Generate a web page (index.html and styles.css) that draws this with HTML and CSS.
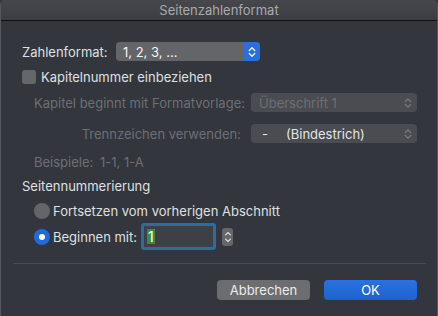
FILE: index.html
```html
<!DOCTYPE html>
<html lang="de">
<head>
<meta charset="utf-8">
<title>Seitenzahlenformat</title>
<link rel="stylesheet" href="styles.css">
</head>
<body>
<div class="window">
  <div class="titlebar">Seitenzahlenformat</div>
  <div class="content">
    <div class="row r1">
      <span class="label fmt">Zahlenformat:</span>
      <div class="popup main">
        <span class="ptext">1, 2, 3, ...</span>
        <span class="pstep blue">
          <svg width="8" height="12" viewBox="0 0 8 12"><path d="M1.2 4.6 L4 1.8 L6.8 4.6 M1.2 7.4 L4 10.2 L6.8 7.4" fill="none" stroke="#fff" stroke-width="1.3" stroke-linecap="round" stroke-linejoin="round"/></svg>
        </span>
      </div>
    </div>
    <div class="row r2">
      <span class="checkbox"></span>
      <span class="label">Kapitelnummer einbeziehen</span>
    </div>
    <div class="row r3">
      <span class="label col dis">Kapitel beginnt mit Formatvorlage:</span>
      <div class="popup wide">
        <span class="ptext dis">Überschrift 1</span>
        <span class="chev">
          <svg width="8" height="12" viewBox="0 0 8 12"><path d="M1.2 4.6 L4 1.8 L6.8 4.6 M1.2 7.4 L4 10.2 L6.8 7.4" fill="none" stroke="#7b7d82" stroke-width="1.2" stroke-linecap="round" stroke-linejoin="round"/></svg>
        </span>
      </div>
    </div>
    <div class="row r4">
      <span class="label col dis">Trennzeichen verwenden:</span>
      <div class="popup wide">
        <span class="ptext light"><span class="dash">-</span>(Bindestrich)</span>
        <span class="chev">
          <svg width="8" height="12" viewBox="0 0 8 12"><path d="M1.2 4.6 L4 1.8 L6.8 4.6 M1.2 7.4 L4 10.2 L6.8 7.4" fill="none" stroke="#7b7d82" stroke-width="1.2" stroke-linecap="round" stroke-linejoin="round"/></svg>
        </span>
      </div>
    </div>
    <div class="row r5">
      <span class="label dis ex">Beispiele:</span>
      <span class="label dis">1-1, 1-A</span>
    </div>
    <div class="row r6">
      <span class="label">Seitennummerierung</span>
    </div>
    <div class="row r7">
      <span class="radio"></span>
      <span class="label">Fortsetzen vom vorherigen Abschnitt</span>
    </div>
    <div class="row r8">
      <span class="radio on"></span>
      <span class="label begin">Beginnen mit:</span>
      <div class="field"><span class="sel">1</span></div>
      <span class="stepper">
        <svg width="8" height="14" viewBox="0 0 8 14"><path d="M1.5 5 L4 2.5 L6.5 5 M1.5 9 L4 11.5 L6.5 9" fill="none" stroke="#d8d9db" stroke-width="1.1" stroke-linecap="round" stroke-linejoin="round"/></svg>
      </span>
    </div>
    <div class="separator"></div>
    <div class="buttons">
      <button class="btn cancel">Abbrechen</button>
      <button class="btn ok">OK</button>
    </div>
  </div>
</div>
</body>
</html>
```
FILE: styles.css
```css
* { box-sizing: border-box; }
html, body { margin: 0; padding: 0; background: #33363d; }
body {
  font-family: Inter, "Liberation Sans", Arial, sans-serif;
  font-size: 13px;
  color: #dfe0e2;
}
.window {
  width: 438px;
  height: 316px;
  background: #33363d;
  border-left: 1px solid #55575c;
  border-right: 1px solid #55575c;
  border-radius: 5px 5px 0 0;
  overflow: hidden;
}
.titlebar {
  height: 21px;
  background: linear-gradient(#46484d, #3b3d42);
  border-bottom: 1px solid #101012;
  color: #a9aaad;
  text-align: center;
  line-height: 20px;
  font-size: 13px;
}
.content { padding-left: 21px; }
.row { display: flex; align-items: center; }
.label { white-space: nowrap; }
.dis { color: #6d6f74; }
.r1 { height: 19px; margin-top: 21px; }
.fmt { width: 94px; }
.popup {
  display: flex;
  align-items: center;
  height: 19px;
  border-radius: 4px;
  background: #4a4c52;
}
.popup.main {
  width: 144px;
  background: #646569;
  overflow: hidden;
}
.ptext { flex: 1; padding-left: 8px; white-space: nowrap; }
.main .ptext { color: #f4f4f5; padding-left: 7px; }
.pstep {
  width: 16px;
  height: 19px;
  display: flex;
  align-items: center;
  justify-content: center;
}
.pstep.blue { background: #2a6fdc; }
.chev { width: 16px; display: flex; justify-content: center; margin-right: 1px; }
.r2 { height: 20px; margin-top: 6px; }
.checkbox {
  width: 14px;
  height: 14px;
  border-radius: 3px;
  background: #65676b;
  margin-right: 5px;
}
.r3 { height: 19px; margin-top: 6px; padding-left: 12px; }
.col { width: 217px; text-align: right; padding-right: 10px; }
.popup.wide { width: 166px; }
.ptext.light { color: #e4e5e6; }
.dash { display: inline-block; width: 27px; padding-left: 3px; }
.r4 { height: 19px; margin-top: 12px; padding-left: 12px; }
.r5 { height: 20px; margin-top: 9px; padding-left: 12px; }
.ex { width: 66px; }
.r6 { height: 20px; margin-top: 4px; }
.r7 { height: 20px; margin-top: 5px; padding-left: 12px; }
.radio {
  width: 16px;
  height: 16px;
  border-radius: 50%;
  background: #636569;
  margin-right: 3px;
  display: flex;
  align-items: center;
  justify-content: center;
}
.radio.on { background: #1f6bdb; }
.radio.on::after {
  content: "";
  width: 6px;
  height: 6px;
  border-radius: 50%;
  background: #fff;
}
.r8 { height: 27px; margin-top: 2px; padding-left: 12px; }
.begin { width: 88px; }
.field {
  width: 75px;
  height: 27px;
  border: 3px solid #2d6c9c;
  border-radius: 3px;
  background: #3e4046;
  padding: 3px 0 0 3px;
}
.sel {
  display: inline-block;
  background: #3d8b3d;
  color: #fff;
  height: 15px;
  line-height: 15px;
  padding: 0 1px;
  font-size: 14px;
}
.stepper {
  width: 11px;
  height: 18px;
  margin-left: 6px;
  border-radius: 3px;
  background: #65676b;
  display: flex;
  align-items: center;
  justify-content: center;
}
.separator {
  height: 1px;
  background: #4a4d53;
  margin: 13px 11px 0 -9px;
}
.buttons {
  display: flex;
  justify-content: flex-end;
  gap: 14px;
  margin-top: 16px;
  padding-right: 20px;
}
.btn {
  width: 93px;
  height: 20px;
  border: none;
  border-radius: 4px;
  font-family: Inter, "Liberation Sans", Arial, sans-serif;
  font-size: 13px;
  padding: 0;
  line-height: 20px;
}
.btn.cancel { background: #6b6d71; color: #ececed; }
.btn.ok { background: linear-gradient(#2b72e0, #1d63cf); color: #fff; }
```
